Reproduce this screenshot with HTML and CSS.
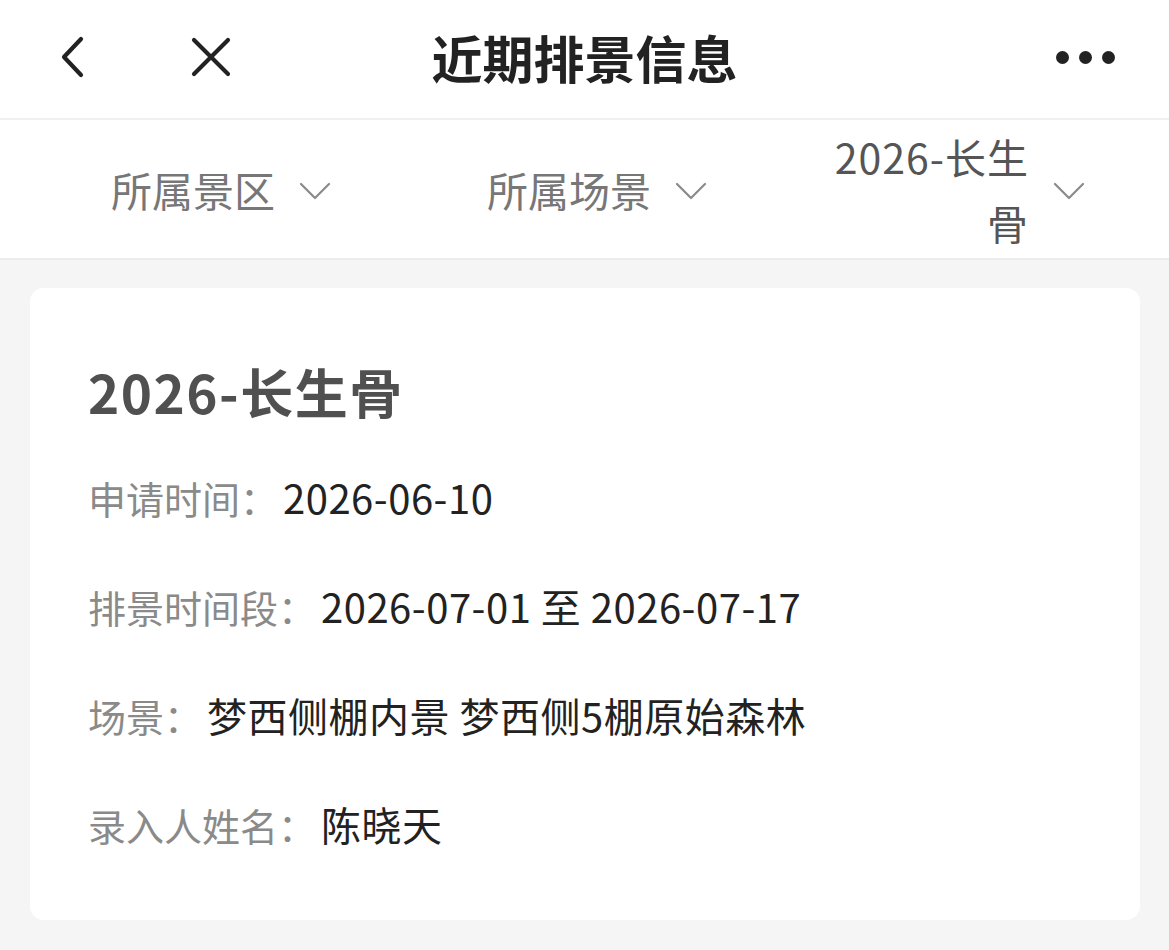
FILE: index.html
```html
<!DOCTYPE html>
<html lang="zh-CN">
<head>
<meta charset="utf-8">
<title>近期排景信息</title>
<link rel="stylesheet" href="styles.css">
</head>
<body>
<div class="page">
  <header class="nav">
    <div class="nav-left">
      <svg class="icon-back" width="40" height="50" viewBox="0 0 40 50"><path d="M28 7 L11 25 L28 43" fill="none" stroke="#222" stroke-width="4.2" stroke-linecap="round" stroke-linejoin="round"/></svg>
      <svg class="icon-close" width="44" height="44" viewBox="0 0 44 44"><path d="M5 5 L39 39 M39 5 L5 39" fill="none" stroke="#222" stroke-width="4.2" stroke-linecap="round"/></svg>
    </div>
    <h1 class="nav-title">近期排景信息</h1>
    <div class="nav-more">
      <span class="dot"></span><span class="dot"></span><span class="dot"></span>
    </div>
  </header>
  <div class="filters">
    <div class="filter f1">
      <span class="filter-text">所属景区</span>
      <svg class="chev" width="32" height="20" viewBox="0 0 32 20"><path d="M2 3 L16 17 L30 3" fill="none" stroke="#8a8a8a" stroke-width="2.2" stroke-linecap="round" stroke-linejoin="round"/></svg>
    </div>
    <div class="filter f2">
      <span class="filter-text">所属场景</span>
      <svg class="chev" width="32" height="20" viewBox="0 0 32 20"><path d="M2 3 L16 17 L30 3" fill="none" stroke="#8a8a8a" stroke-width="2.2" stroke-linecap="round" stroke-linejoin="round"/></svg>
    </div>
    <div class="filter f3">
      <span class="filter-text active">2026-长生骨</span>
      <svg class="chev" width="32" height="20" viewBox="0 0 32 20"><path d="M2 3 L16 17 L30 3" fill="none" stroke="#8a8a8a" stroke-width="2.2" stroke-linecap="round" stroke-linejoin="round"/></svg>
    </div>
  </div>
  <main class="content">
    <section class="card">
      <h2 class="card-title">2026-长生骨</h2>
      <div class="row"><span class="label">申请时间：</span><span class="value">2026-06-10</span></div>
      <div class="row"><span class="label">排景时间段：</span><span class="value">2026-07-01 至 2026-07-17</span></div>
      <div class="row"><span class="label">场景：</span><span class="value">梦西侧棚内景 梦西侧5棚原始森林</span></div>
      <div class="row"><span class="label">录入人姓名：</span><span class="value">陈晓天</span></div>
    </section>
  </main>
</div>
</body>
</html>
```

FILE: styles.css
```css
* { box-sizing: border-box; }
html, body { margin: 0; padding: 0; }
body {
  width: 1169px;
  height: 950px;
  overflow: hidden;
  background: #f5f5f5;
  font-family: "Noto Sans CJK SC", "Noto Sans", sans-serif;
}
.page { display: flex; flex-direction: column; height: 950px; }

.nav {
  height: 120px;
  background: #fff;
  border-bottom: 2px solid #f0f0f0;
  display: flex;
  align-items: center;
  padding: 0 52px 0 52px;
}
.nav-left { display: flex; align-items: center; gap: 96px; width: 250px; padding-bottom: 4px; }
.icon-back { display: block; margin-left: 1px; }
.icon-close { display: block; }
.nav-title {
  flex: 1;
  margin: 0;
  text-align: center;
  font-size: 51px;
  font-weight: 700;
  color: #222;
  padding-bottom: 4px;
}
.nav-more { width: 250px; display: flex; justify-content: flex-end; gap: 10px; padding-bottom: 4px; padding-right: 2px; }
.dot { width: 13px; height: 13px; border-radius: 50%; background: #222; }

.filters {
  height: 140px;
  background: #fff;
  border-bottom: 2px solid #ececec;
  display: flex;
  align-items: center;
  padding-left: 111px;
}
.filter { display: flex; align-items: center; gap: 24px; }
.f2 { margin-left: 156px; }
.f3 { margin-left: 122px; gap: 24px; }
.filter-text {
  font-size: 41px;
  color: #777;
  line-height: 1;
}
.filter-text.active {
  color: #555;
  width: 200px;
  text-align: right;
  line-height: 66px;
  letter-spacing: 1px;
}
.chev { display: block; margin-top: 4px; }

.content { padding: 28px 29px 0 30px; }
.card {
  background: #fff;
  border-radius: 14px;
  height: 632px;
  padding: 70px 58px 0 58px;
}
.card-title {
  margin: 0 0 53px 0;
  font-size: 53px;
  font-weight: 700;
  color: #505050;
  line-height: 66px;
  letter-spacing: 1.5px;
}
.row {
  display: flex;
  align-items: baseline;
  height: 109px;
  font-size: 38px;
  line-height: 1;
}
.label { color: #8a8a8a; }
.value { color: #222; margin-left: 5px; font-size: 40px; letter-spacing: 0.5px; }
```
